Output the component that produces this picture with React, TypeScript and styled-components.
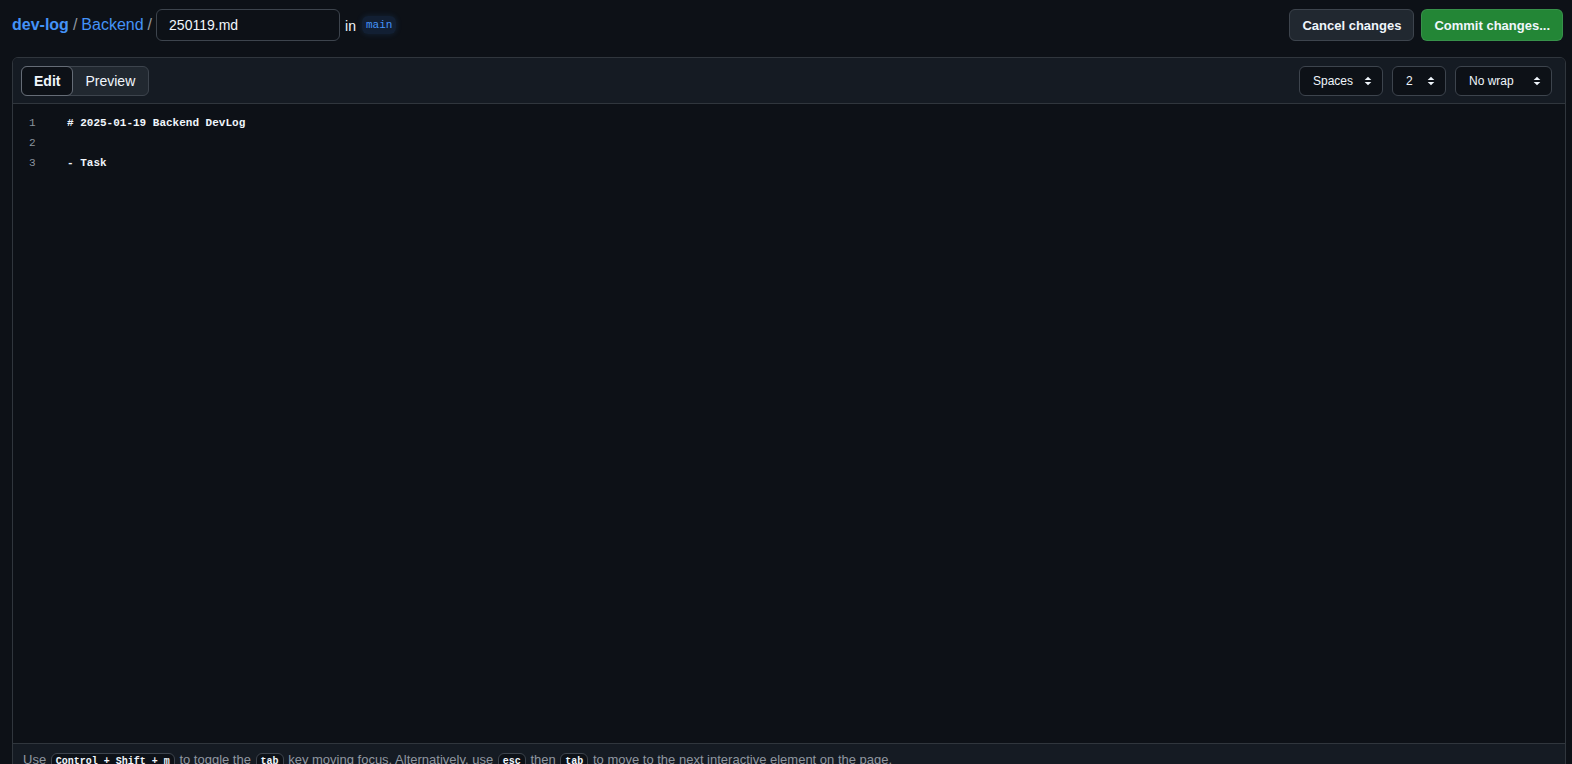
import styled, { createGlobalStyle } from 'styled-components'

const GlobalStyle = createGlobalStyle`
  html, body {
    margin: 0;
    padding: 0;
    background: #0d1117;
    overflow: hidden;
  }
  body {
    font-family: "Liberation Sans", Arial, sans-serif;
    color: #f0f6fc;
  }
`

const lines = ['# 2025-01-19 Backend DevLog', '', '- Task']

export default function App() {
  return (
    <Page>
      <GlobalStyle />
      <TopBar>
        <Breadcrumbs>
          <RepoLink>dev-log</RepoLink>
          <Slash>/</Slash>
          <DirLink>Backend</DirLink>
          <Slash>/</Slash>
          <FileNameInput defaultValue="250119.md" />
          <InText>in</InText>
          <BranchBadge>main</BranchBadge>
        </Breadcrumbs>
        <Actions>
          <Button>Cancel changes</Button>
          <Button primary>Commit changes...</Button>
        </Actions>
      </TopBar>
      <EditorPanel>
        <PanelHeader>
          <Segmented>
            <SegButton selected>Edit</SegButton>
            <SegButton>Preview</SegButton>
          </Segmented>
          <Options>
            <Select width={84}>Spaces<Caret /></Select>
            <Select width={54}>2<Caret /></Select>
            <Select width={97}>No wrap<Caret /></Select>
          </Options>
        </PanelHeader>
        <CodeArea>
          {lines.map((text, i) => (
            <CodeLine key={i}>
              <LineNo>{i + 1}</LineNo>
              <LineText>{text}</LineText>
            </CodeLine>
          ))}
        </CodeArea>
        <Footer>
          Use <Kbd>Control + Shift + m</Kbd> to toggle the <Kbd>tab</Kbd> key moving focus. Alternatively, use{' '}
          <Kbd>esc</Kbd> then <Kbd>tab</Kbd> to move to the next interactive element on the page.
        </Footer>
      </EditorPanel>
    </Page>
  )
}

function Caret() {
  return (
    <CaretSvg viewBox="0 0 16 16" width="14" height="14">
      <path d="M4.2 6.9 8 3.1l3.8 3.8z" fill="currentColor" />
      <path d="M4.2 9.1h7.6L8 12.9z" fill="currentColor" />
    </CaretSvg>
  )
}

const Page = styled.div`
  height: calc(100vh + 20px);
  display: flex;
  flex-direction: column;
  padding: 9px 6px 0 12px;
  box-sizing: border-box;
`

const TopBar = styled.div`
  display: flex;
  justify-content: space-between;
  align-items: center;
  height: 32px;
  margin-bottom: 16px;
  padding-right: 3px;
`

const Breadcrumbs = styled.div`
  display: flex;
  align-items: center;
  font-size: 16px;
`

const RepoLink = styled.span`
  color: #4493f8;
  font-weight: 700;
`

const DirLink = styled.span`
  color: #4493f8;
`

const Slash = styled.span`
  color: #9198a1;
  margin: 0 4px;
`

const FileNameInput = styled.input`
  width: 184px;
  height: 32px;
  box-sizing: border-box;
  background: #0d1117;
  border: 1px solid #3d444d;
  border-radius: 6px;
  color: #f0f6fc;
  font-family: inherit;
  font-size: 14px;
  padding: 0 12px;
  outline: none;
`

const InText = styled.span`
  font-size: 14px;
  margin: 0 4px 0 5px;
  padding-top: 2px;
`

const BranchBadge = styled.span`
  font-family: "Liberation Mono", monospace;
  font-size: 11px;
  color: #4493f8;
  background: rgba(56, 139, 253, 0.12);
  border-radius: 6px;
  padding: 3px 4px;
  margin-left: 2px;
  box-shadow: 0 0 6px rgba(56, 139, 253, 0.15);
`

const Actions = styled.div`
  display: flex;
  gap: 7px;
`

const Button = styled.button<{ primary?: boolean }>`
  height: 32px;
  box-sizing: border-box;
  padding: 0 12px;
  border-radius: 6px;
  border: 1px solid ${p => (p.primary ? 'rgba(240,246,252,0.1)' : '#3d444d')};
  background: ${p => (p.primary ? '#238636' : '#212830')};
  color: #f0f6fc;
  font-family: inherit;
  font-size: 13px;
  font-weight: 700;
`

const EditorPanel = styled.div`
  flex: 1;
  display: flex;
  flex-direction: column;
  border: 1px solid #30363d;
  border-radius: 6px;
  overflow: hidden;
`

const PanelHeader = styled.div`
  display: flex;
  justify-content: space-between;
  align-items: center;
  padding: 8px 13px 7px 8px;
  background: #151b23;
  border-bottom: 1px solid #30363d;
`

const Segmented = styled.div`
  display: flex;
  background: #212830;
  border: 1px solid #3d444d;
  border-radius: 6px;
  height: 30px;
  box-sizing: border-box;
`

const SegButton = styled.div<{ selected?: boolean }>`
  display: flex;
  align-items: center;
  padding: 0 ${p => (p.selected ? '12px' : '13px')};
  margin: -1px;
  font-size: 14px;
  font-weight: ${p => (p.selected ? 700 : 400)};
  color: #f0f6fc;
  background: ${p => (p.selected ? '#0d1117' : 'transparent')};
  border: 1px solid ${p => (p.selected ? '#656c76' : 'transparent')};
  border-radius: 6px;
`

const Options = styled.div`
  display: flex;
  gap: 9px;
`

const Select = styled.div<{ width: number }>`
  width: ${p => p.width}px;
  height: 30px;
  box-sizing: border-box;
  display: flex;
  align-items: center;
  justify-content: space-between;
  padding: 0 7px 0 13px;
  background: #0d1117;
  border: 1px solid #3d444d;
  border-radius: 6px;
  font-size: 12px;
  color: #f0f6fc;
`

const CaretSvg = styled.svg`
  color: #f0f6fc;
`

const CodeArea = styled.div`
  flex: 1;
  padding-top: 9px;
  font-family: "Liberation Mono", monospace;
  font-size: 11px;
`

const CodeLine = styled.div`
  display: flex;
  height: 20px;
  align-items: center;
`

const LineNo = styled.span`
  width: 54px;
  padding-left: 16px;
  box-sizing: border-box;
  color: #8b949e;
`

const LineText = styled.span`
  color: #f0f6fc;
  font-weight: 700;
  white-space: pre;
`

const Footer = styled.div`
  height: 40px;
  box-sizing: border-box;
  padding: 8px 10px;
  background: #151b23;
  border-top: 1px solid #30363d;
  font-size: 13px;
  color: #9198a1;
  white-space: nowrap;
`

const Kbd = styled.span`
  display: inline-block;
  font-family: "Liberation Mono", monospace;
  font-size: 10px;
  font-weight: 700;
  color: #f0f6fc;
  background: #0d1117;
  border: 1px solid #3d444d;
  border-radius: 6px;
  padding: 2px 4px;
  margin: 0 1px;
`
